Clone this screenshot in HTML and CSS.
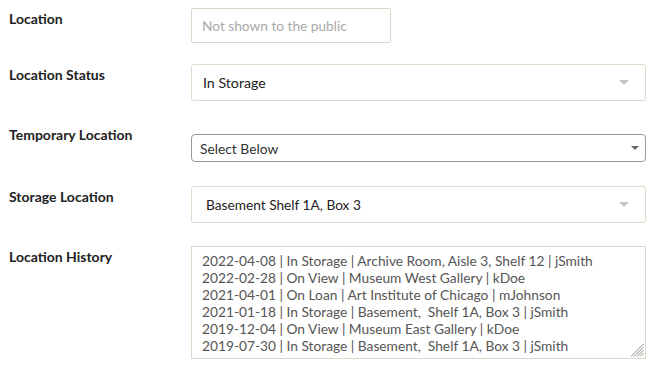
FILE: index.html
```html
<!DOCTYPE html>
<html lang="en">
<head>
<meta charset="utf-8">
<title>Location</title>
<link rel="stylesheet" href="styles.css">
</head>
<body>
<form class="form">
  <div class="row row-location">
    <div class="label">Location</div>
    <div class="field input placeholder">Not shown to the public</div>
  </div>
  <div class="row row-status">
    <div class="label">Location Status</div>
    <div class="field select select-soft"><span class="value value-status">In Storage</span><span class="arrow arrow-soft"></span></div>
  </div>
  <div class="row row-temp">
    <div class="label label-tight">Temporary Location</div>
    <div class="field select select-native"><span class="value value-native">Select Below</span><span class="arrow arrow-native"></span></div>
  </div>
  <div class="row row-storage">
    <div class="label">Storage Location</div>
    <div class="field select select-soft"><span class="value value-storage">Basement Shelf 1A, Box 3</span><span class="arrow arrow-soft"></span></div>
  </div>
  <div class="row row-history">
    <div class="label">Location History</div>
    <div class="history-wrap">
      <textarea class="field history" readonly>2022-04-08 | In Storage | Archive Room, Aisle 3, Shelf 12 | jSmith
2022-02-28 | On View | Museum West Gallery | kDoe
2021-04-01 | On Loan | Art Institute of Chicago | mJohnson
2021-01-18 | In Storage | Basement,  Shelf 1A, Box 3 | jSmith
2019-12-04 | On View | Museum East Gallery | kDoe
2019-07-30 | In Storage | Basement,  Shelf 1A, Box 3 | jSmith</textarea>
      <svg class="grip" width="14" height="14" viewBox="0 0 14 14" aria-hidden="true">
        <g stroke="#8a8a8a" stroke-width="1">
          <line x1="13.5" y1="1" x2="1" y2="13.5"/>
          <line x1="13.5" y1="4" x2="4" y2="13.5"/>
          <line x1="13.5" y1="7" x2="7" y2="13.5"/>
          <line x1="13.5" y1="10" x2="10" y2="13.5"/>
        </g>
      </svg>
    </div>
  </div>
</form>
</body>
</html>
```

FILE: styles.css
```css
html, body {
  margin: 0;
  padding: 0;
  background: #ffffff;
}

body {
  font-family: Lato, "Open Sans", sans-serif;
  color: #222;
}

.form {
  display: flex;
  flex-direction: column;
  padding-top: 8px;
}

.row {
  display: flex;
  align-items: flex-start;
}

.row-status { margin-top: 21px; }
.row-temp { margin-top: 26px; }
.row-storage { margin-top: 24px; }
.row-history { margin-top: 23px; }

.label {
  box-sizing: border-box;
  width: 191px;
  padding-left: 9px;
  padding-top: 3px;
  font-size: 14px;
  line-height: 16px;
  font-weight: 700;
  color: #222;
}

.label-tight {
  padding-top: 0;
}

.field {
  box-sizing: border-box;
  font-family: Lato, "Open Sans", sans-serif;
}

.input {
  width: 200px;
  height: 35px;
  border: 1px solid #d9d9c9;
  border-radius: 2px;
  padding: 0 10px;
  font-size: 13.7px;
  line-height: 33px;
}

.placeholder {
  color: #a9a9a9;
}

.select {
  width: 455px;
  display: flex;
  align-items: center;
  justify-content: space-between;
  background: #fff;
}

.select-soft {
  height: 37px;
  border: 1px solid #dcdccb;
  border-radius: 3px;
  padding-right: 16px;
}

.select-native {
  margin-top: 7px;
  height: 28px;
  border: 1px solid #9a9a9a;
  border-radius: 4px;
  padding-right: 6px;
}

.value {
  font-size: 14px;
  color: #222;
}

.value-status { padding-left: 11px; font-size: 14.2px; }
.value-storage { padding-left: 14px; font-size: 13.7px; }
.value-native { padding-left: 8px; font-size: 13.8px; color: #333; }

.arrow {
  width: 0;
  height: 0;
  border-left-style: solid;
  border-right-style: solid;
  border-top-style: solid;
  border-left-color: transparent;
  border-right-color: transparent;
}

.arrow-soft {
  border-left-width: 5px;
  border-right-width: 5px;
  border-top-width: 5px;
  border-top-color: #c4c4c4;
}

.arrow-native {
  border-left-width: 4px;
  border-right-width: 4px;
  border-top-width: 4px;
  border-top-color: #666;
}

.history-wrap {
  position: relative;
  width: 455px;
  height: 113px;
}

.history {
  display: block;
  width: 455px;
  height: 113px;
  margin: 0;
  border: 1px solid #d9d9c9;
  border-radius: 0;
  padding: 5px 10px;
  font-size: 13.75px;
  line-height: 17px;
  color: #555;
  background: #fff;
  resize: none;
  overflow: hidden;
  outline: none;
}

.grip {
  position: absolute;
  right: 2px;
  bottom: 2px;
}
```
